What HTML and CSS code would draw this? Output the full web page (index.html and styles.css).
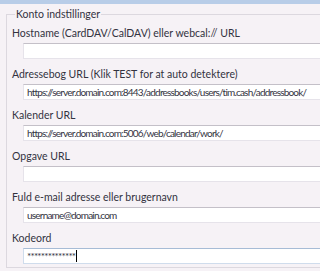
FILE: index.html
```html
<!DOCTYPE html>
<html lang="da">
<head>
    <meta charset="UTF-8">
    <title>Konto indstillinger</title>
    <link rel="stylesheet" href="styles.css">
</head>
<body>

<div class="topbar"></div>

<fieldset class="settings">
    <legend>Konto indstillinger</legend>

    <div class="field">
        <label for="host">Hostname (CardDAV/CalDAV) eller webcal:// URL</label>
        <input type="text" id="host" value="">
    </div>

    <div class="field">
        <label for="book">Adressebog URL (Klik TEST for at auto detektere)</label>
        <input type="text" id="book" value="https://server.domain.com:8443/addressbooks/users/tim.cash/addressbook/">
    </div>

    <div class="field">
        <label for="cal">Kalender URL</label>
        <input type="text" id="cal" value="https://server.domain.com:5006/web/calendar/work/">
    </div>

    <div class="field">
        <label for="task">Opgave URL</label>
        <input type="text" id="task" value="">
    </div>

    <div class="field">
        <label for="user">Fuld e-mail adresse eller brugernavn</label>
        <input type="text" id="user" value="username@domain.com">
    </div>

    <div class="field">
        <label for="pass">Kodeord</label>
        <div class="input focused">**************<span class="caret"></span></div>
    </div>
</fieldset>

</body>
</html>
```

FILE: styles.css
```css
body {
    margin: 0;
    width: 320px;
    height: 271px;
    overflow: hidden;
    background-color: #f6f2f6;
    font-family: Lato, "Noto Sans", sans-serif;
    font-size: 10.5px;
    color: #33333f;
}
.topbar {
    height: 4px;
    background-color: #b8cde8;
}
.settings {
    margin: 3px 0 0 6px;
    padding: 0 0 0 5px;
    width: 360px;
    border: 1px solid #dcd8df;
    border-right: none;
}
.settings legend {
    padding: 0 1px;
    margin-left: 3px;
    line-height: 14px;
}
.field {
    display: flex;
    flex-direction: column;
    height: 41px;
}
.field label {
    line-height: 14px;
    margin-top: 5px;
}
.field input,
.field .input {
    box-sizing: border-box;
    margin: 3px 0 0 11px;
    height: 16px;
    width: 320px;
    padding: 0 3px;
    border: 1px solid #e6e3ea;
    border-top-color: #c4c0c8;
    background-color: #fff;
    font-family: Lato, sans-serif;
    font-size: 10px;
    letter-spacing: -0.8px;
    color: #33333f;
    line-height: 14px;
    outline: none;
}
.field .focused {
    border-color: #cfdcec;
    border-top-color: #a7bcd6;
}
.caret {
    display: inline-block;
    width: 1px;
    height: 12px;
    margin-left: 1px;
    background-color: #000;
    vertical-align: -2px;
}
```
